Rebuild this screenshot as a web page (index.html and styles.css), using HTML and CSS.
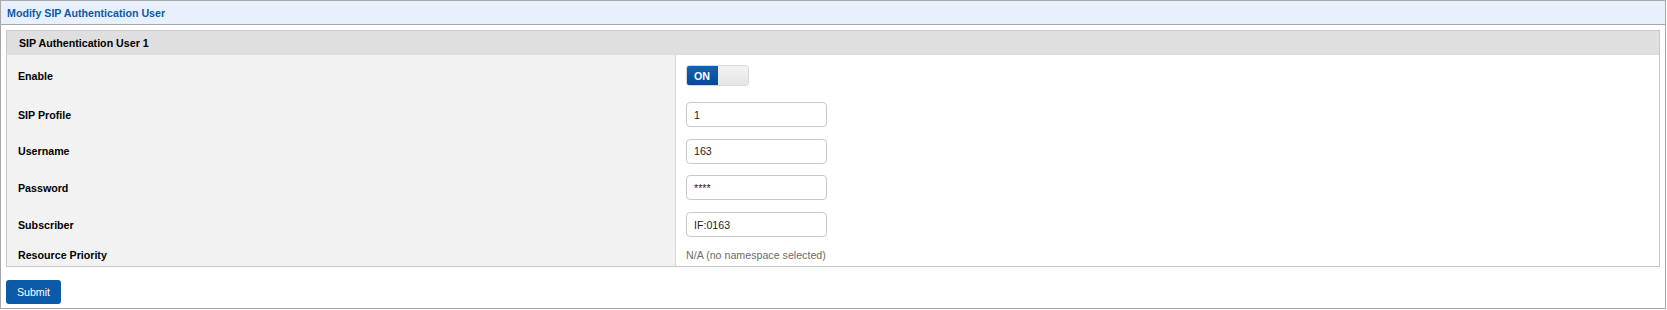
FILE: index.html
```html
<!DOCTYPE html>
<html>
<head>
<meta charset="utf-8">
<link rel="stylesheet" href="styles.css">
</head>
<body>
<div class="panel">
  <div class="panel-head">Modify SIP Authentication User</div>
  <div class="panel-body">
    <div class="section">
      <div class="section-head">SIP Authentication User 1</div>
      <div class="grid">
        <div class="label r-enable">Enable</div>
        <div class="value r-enable">
          <div class="toggle"><span class="on">ON</span><span class="off"></span></div>
        </div>
        <div class="label r-profile">SIP Profile</div>
        <div class="value r-profile"><input class="field" type="text" value="1"></div>
        <div class="label r-user">Username</div>
        <div class="value r-user"><input class="field" type="text" value="163"></div>
        <div class="label r-pass">Password</div>
        <div class="value r-pass"><input class="field" type="text" value="****"></div>
        <div class="label r-sub">Subscriber</div>
        <div class="value r-sub"><input class="field" type="text" value="IF:0163"></div>
        <div class="label r-res">Resource Priority</div>
        <div class="value r-res"><span class="muted">N/A (no namespace selected)</span></div>
      </div>
    </div>
    <button class="submit" type="button">Submit</button>
  </div>
</div>
</body>
</html>
```
FILE: styles.css
```css
html, body {
  margin: 0;
  padding: 0;
  background: #ffffff;
  font-family: "Liberation Sans", Arial, sans-serif;
  font-size: 8pt;
  color: #000;
}
.panel {
  width: 1664px;
  height: 307px;
  border: 1px solid #a8a8a8;
  display: flex;
  flex-direction: column;
}
.panel-head {
  height: 23px;
  border-bottom: 1px solid #a8a8a8;
  background: #e9f0fd;
  color: #0d5aa7;
  font-weight: bold;
  display: flex;
  align-items: center;
  padding-left: 6px;
}
.panel-body {
  padding: 5px 5px 0 5px;
  display: flex;
  flex-direction: column;
  align-items: flex-start;
}
.section {
  align-self: stretch;
  border: 1px solid #c8c8c8;
}
.section-head {
  height: 24px;
  background: #dfdfdf;
  font-weight: bold;
  display: flex;
  align-items: center;
  padding-left: 12px;
}
.grid {
  display: grid;
  grid-template-columns: 668px 1fr;
  grid-template-rows: 41px 37px 36px 37px 37px 23px;
}
.label {
  background: #f2f2f2;
  font-weight: bold;
  display: flex;
  align-items: center;
  padding-left: 11px;
}
.value {
  border-left: 1px solid #d6d6d6;
  display: flex;
  align-items: center;
  padding-left: 10px;
}
.toggle {
  width: 63px;
  height: 21px;
  display: flex;
  border-radius: 3px;
  overflow: hidden;
  box-sizing: border-box;
  border: 1px solid #d8d8d8;
}
.toggle .on {
  width: 32px;
  background: linear-gradient(#0f66b8, #07478c);
  color: #fff;
  font-weight: bold;
  font-size: 8pt;
  display: flex;
  align-items: center;
  justify-content: center;
  margin: -1px 0 -1px -1px;
}
.toggle .off {
  flex: 1;
  background: linear-gradient(#f2f2f2, #e6e6e6);
}
.field {
  width: 141px;
  height: 25px;
  box-sizing: border-box;
  border: 1px solid #c9c9c9;
  border-radius: 4px;
  padding: 0 7px;
  font-family: "Liberation Sans", Arial, sans-serif;
  font-size: 8pt;
  color: #222;
  background: #fff;
  margin: 0;
}
.muted {
  color: #6b6b6b;
}
.submit {
  margin-top: 13px;
  width: 55px;
  height: 24px;
  background: #0b5aa7;
  color: #fff;
  border: none;
  border-radius: 3px;
  font-family: "Liberation Sans", Arial, sans-serif;
  font-size: 8pt;
  font-weight: normal;
  padding: 0;
}
```
